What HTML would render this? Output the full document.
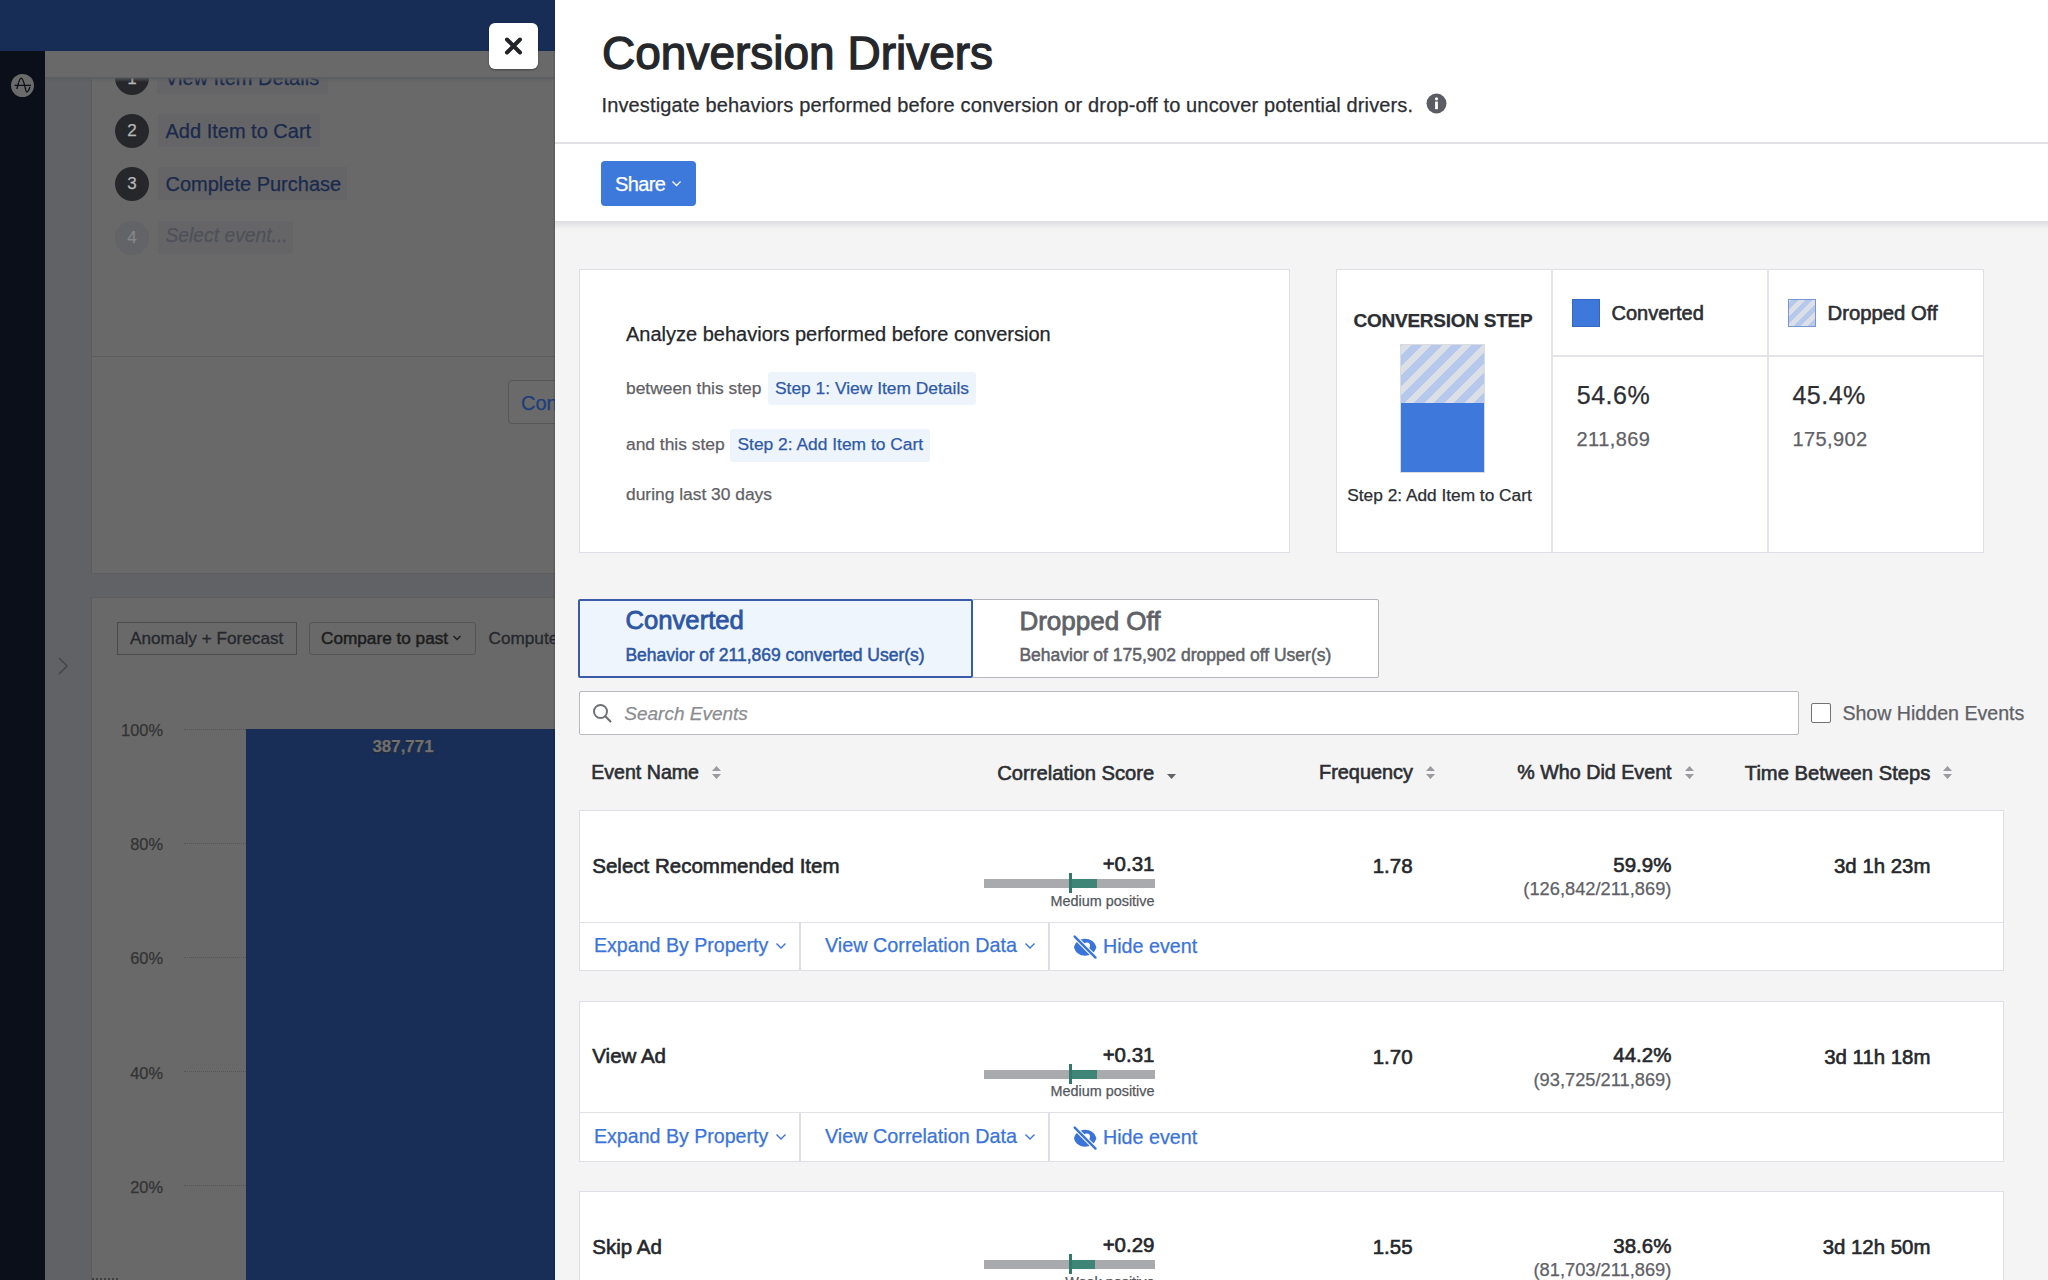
<!DOCTYPE html>
<html><head><meta charset="utf-8">
<style>
*{box-sizing:border-box;margin:0;padding:0}
html,body{width:2048px;height:1280px;overflow:hidden;background:#f4f4f4;font-family:"Liberation Sans",sans-serif;position:relative}
.a{position:absolute}
.t{position:absolute;white-space:nowrap;line-height:1;-webkit-text-stroke-width:0.25px}
.r{text-align:right}
.b{font-weight:bold}
.sb{-webkit-text-stroke:0.55px currentColor}
#L{position:absolute;left:0;top:0;width:555px;height:1280px;background:#616265;overflow:hidden}
</style></head>
<body>
<!-- LEFT DIMMED APP -->
<div id="L">
  <div class="a" style="left:0;top:0;width:555px;height:51px;background:#172d56"></div>
  <div class="a" style="left:0;top:51px;width:45px;height:1229px;background:#0a0f19"></div>
  <!-- logo -->
  <div class="a" style="left:11px;top:73.5px;width:23.2px;height:23.2px;border-radius:50%;background:#6a6a6a"></div>
  <svg class="a" style="left:11px;top:73.5px" width="23" height="23" viewBox="0 0 23 23"><path d="M5.9 15 C7.5 9, 8.5 4.2, 10.1 4.2 C11.8 4.2, 13 9, 13.8 12 C14.5 15, 15 18.1, 15.9 18.1 C17 18.1, 18.5 15, 18.8 12.9 M3.6 11.3 L20 11.3" fill="none" stroke="#0b0f17" stroke-width="1.3"/></svg>
  <!-- header strip -->
  <div class="a" style="left:45px;top:51px;width:510px;height:27px;background:#696969"></div><div class="a" style="left:45px;top:77px;width:510px;height:5px;z-index:5;background:linear-gradient(#5a5c60,rgba(99,99,99,0))"></div>
  <!-- card 1 -->
  <div class="a" style="left:91px;top:78px;width:480px;height:496px;background:#696969;border-left:1px solid #5c5c5c;border-bottom:1px solid #5c5c5c"></div>
  <div class="a" style="left:92px;top:356px;width:470px;height:1px;background:#5d5d5d"></div>
  <div class="a" style="left:45px;top:78px;width:510px;height:300px;overflow:hidden">
    <div class="a" style="left:70px;top:-17px;width:34px;height:34px;border-radius:50%;background:#25272b"></div><div class="t" style="left:70px;top:-8px;width:34px;text-align:center;font-size:17px;color:#b8b8b8">1</div>
    <div class="t" style="left:112px;top:-17px;width:171px;height:33px;background:#656567"></div>
    <div class="t" style="left:120px;top:-10px;font-size:20px;color:#1a2a4c">View Item Details</div>
  </div>
  <div class="a" style="left:115px;top:113.5px;width:34px;height:34px;border-radius:50%;background:#25272b"></div>
  <div class="t" style="left:115px;top:122px;width:34px;text-align:center;font-size:17px;color:#b8b8b8">2</div>
  <div class="a" style="left:158px;top:114px;width:162px;height:33px;background:#656567"></div>
  <div class="t" style="left:165.5px;top:121px;font-size:20px;color:#1a2a4c">Add Item to Cart</div>
  <div class="a" style="left:115px;top:166.5px;width:34px;height:34px;border-radius:50%;background:#25272b"></div>
  <div class="t" style="left:115px;top:175px;width:34px;text-align:center;font-size:17px;color:#b8b8b8">3</div>
  <div class="a" style="left:158px;top:167px;width:189px;height:33px;background:#656567"></div>
  <div class="t" style="left:165.5px;top:173.5px;font-size:20px;color:#1a2a4c">Complete Purchase</div>
  <div class="a" style="left:115px;top:220.5px;width:34px;height:34px;border-radius:50%;background:#636468"></div>
  <div class="t" style="left:115px;top:229px;width:34px;text-align:center;font-size:17px;color:#86878a">4</div>
  <div class="a" style="left:158px;top:221px;width:135px;height:33px;background:#656567"></div>
  <div class="t" style="left:165.5px;top:226px;font-size:19.3px;font-style:italic;color:#4e5159">Select event...</div>
  <!-- Con button -->
  <div class="a" style="left:508px;top:380px;width:80px;height:44px;border:1px solid #575757;border-radius:4px;background:#6a6a6a"></div>
  <div class="t" style="left:521px;top:392.5px;font-size:20px;color:#1d3f7a">Con</div>
  <!-- card 2 -->
  <div class="a" style="left:91px;top:597px;width:480px;height:700px;background:#696969;border-left:1px solid #5c5c5c;border-top:1px solid #5c5c5c"></div>
  <div class="a" style="left:117px;top:622px;width:180px;height:33px;border:1.5px solid #4a4a4a"></div>
  <div class="t" style="left:130px;top:630px;font-size:17.2px;color:#25272c;-webkit-text-stroke:0.3px #25272c">Anomaly + Forecast</div>
  <div class="a" style="left:309px;top:622px;width:167px;height:33px;border:1px solid #555;border-radius:3px"></div>
  <div class="t" style="left:321px;top:630px;font-size:17.2px;color:#1d1d1d;-webkit-text-stroke:0.5px #1d1d1d">Compare to past</div>
  <svg class="a" style="left:452px;top:634px" width="10" height="8" viewBox="0 0 10 8"><path d="M1.5 2 L5 5.5 L8.5 2" fill="none" stroke="#1d1d1d" stroke-width="1.4"/></svg>
  <div class="t" style="left:488.5px;top:630px;font-size:17.2px;color:#25272c;-webkit-text-stroke:0.3px #25272c">Compute</div>
  <svg class="a" style="left:56px;top:656px" width="14" height="20" viewBox="0 0 14 20"><path d="M3 2 L11 10 L3 18" fill="none" stroke="#46474b" stroke-width="1.6"/></svg>
  <!-- chart -->
  <div class="t r" style="left:100px;width:63px;top:722px;font-size:16.4px;color:#333">100%</div>
  <div class="t r" style="left:100px;width:63px;top:836px;font-size:16.4px;color:#333">80%</div>
  <div class="t r" style="left:100px;width:63px;top:950px;font-size:16.4px;color:#333">60%</div>
  <div class="t r" style="left:100px;width:63px;top:1064.5px;font-size:16.4px;color:#333">40%</div>
  <div class="t r" style="left:100px;width:63px;top:1178.5px;font-size:16.4px;color:#333">20%</div>
  <div class="a" style="left:184px;top:728.5px;width:62px;height:0;border-top:1px dotted #555"></div>
  <div class="a" style="left:184px;top:842.5px;width:62px;height:0;border-top:1px dotted #555"></div>
  <div class="a" style="left:184px;top:956.5px;width:62px;height:0;border-top:1px dotted #555"></div>
  <div class="a" style="left:184px;top:1071px;width:62px;height:0;border-top:1px dotted #555"></div>
  <div class="a" style="left:184px;top:1185px;width:62px;height:0;border-top:1px dotted #555"></div>
  <div class="a" style="left:246px;top:729px;width:320px;height:560px;background:#182e57"></div>
  <div class="t b" style="left:343px;width:120px;text-align:center;top:738.5px;font-size:16.9px;color:#707070;text-shadow:0 1px 1px #222">387,771</div>
  <div class="a" style="left:92px;top:1278px;width:26px;height:2px;border-top:2px dotted #3e3f43"></div>
  <!-- close button -->
  <div class="a" style="left:489px;top:22.5px;width:48.5px;height:46px;background:#fff;border-radius:6px;box-shadow:0 1px 2px rgba(0,0,0,.35)"></div>
  <svg class="a" style="left:489px;top:22.5px" width="49" height="46" viewBox="0 0 49 46"><path d="M18 16.5 L31 29.5 M31 16.5 L18 29.5" stroke="#222428" stroke-width="4" stroke-linecap="round"/></svg>
</div>
<div class="a" style="left:553px;top:0;width:3px;height:1280px;background:linear-gradient(to right,rgba(0,0,0,0),rgba(0,0,0,.25))"></div>

<!-- RIGHT PANEL -->
<div class="a" style="left:555px;top:0;width:1493px;height:1280px;background:#f4f4f4"></div>
<div class="a" style="left:555px;top:0;width:1493px;height:222px;background:#fff"></div>
<div class="a" style="left:555px;top:142px;width:1493px;height:2px;background:#e0e1e5"></div>
<div class="a" style="left:555px;top:221px;width:1493px;height:8px;background:linear-gradient(#dcdde1,#f4f4f4)"></div>
<div class="t" style="left:602px;top:29.5px;font-size:46px;color:#25272b;-webkit-text-stroke:1.3px #25272b">Conversion Drivers</div>
<div class="t" style="left:601.5px;top:95.4px;font-size:20px;color:#2c2e33;letter-spacing:0.14px">Investigate behaviors performed before conversion or drop-off to uncover potential drivers.</div>
<svg class="a" style="left:1426px;top:92.5px" width="21" height="21" viewBox="0 0 21 21"><circle cx="10.5" cy="10.5" r="10" fill="#5b5d62"/><circle cx="10.5" cy="5.8" r="1.6" fill="#fff"/><rect x="9.1" y="8.6" width="2.8" height="7.6" fill="#fff"/></svg>
<div class="a" style="left:601px;top:160.5px;width:94.5px;height:45.5px;background:#3d78db;border-radius:4px"></div>
<div class="t" style="left:615px;top:173.8px;font-size:20px;color:#fff;letter-spacing:-0.6px">Share</div>
<svg class="a" style="left:671px;top:179px" width="11" height="9" viewBox="0 0 11 9"><path d="M1.5 2.5 L5.5 6.5 L9.5 2.5" fill="none" stroke="#fff" stroke-width="1.3"/></svg>

<!-- card 1 -->
<div class="a" style="left:579px;top:269px;width:711px;height:284px;background:#fff;border:1.5px solid #dcdfe6"></div>
<div class="t" style="left:626px;top:324.3px;font-size:20px;color:#25272b">Analyze behaviors performed before conversion</div>
<div class="t" style="left:626px;top:379.5px;font-size:17.4px;color:#5f6166">between this step</div>
<div class="a" style="left:768px;top:371.5px;width:208px;height:33px;background:#eef4fc;border-radius:3px"></div>
<div class="t" style="left:775px;top:379.5px;font-size:17.4px;color:#2f5aa8">Step 1: View Item Details</div>
<div class="t" style="left:626px;top:436.2px;font-size:17.4px;color:#5f6166">and this step</div>
<div class="a" style="left:730px;top:428.5px;width:200px;height:33px;background:#eef4fc;border-radius:3px"></div>
<div class="t" style="left:737.5px;top:436.2px;font-size:17.4px;color:#2f5aa8">Step 2: Add Item to Cart</div>
<div class="t" style="left:626px;top:485.7px;font-size:17.4px;color:#5f6166">during last 30 days</div>

<!-- card 2 -->
<div class="a" style="left:1336px;top:269px;width:648px;height:284px;background:#fff;border:1.5px solid #dcdfe6"></div>
<div class="a" style="left:1550.5px;top:269px;width:2px;height:284px;background:#e2e4e9"></div>
<div class="a" style="left:1766.5px;top:269px;width:2px;height:284px;background:#e2e4e9"></div>
<div class="a" style="left:1551px;top:355px;width:432px;height:2px;background:#e2e4e9"></div>
<div class="t b" style="left:1343px;width:200px;text-align:center;top:311px;font-size:19px;color:#2c2e33;letter-spacing:-0.25px">CONVERSION STEP</div>
<div class="a" style="left:1400px;top:343.5px;width:85px;height:129px;border:1px solid #d9dbe0;overflow:hidden">
  <div class="a" style="left:-9px;top:0;width:92px;height:58px;background:repeating-linear-gradient(-45deg,#b6c8ec 0,#b6c8ec 7.4px,#dcdfe5 7.4px,#dcdfe5 14.1px)"></div>
  <div class="a" style="left:0;top:58px;width:83px;height:70px;background:#3f78db"></div>
</div>
<div class="t" style="left:1347.3px;top:487.3px;font-size:17.3px;color:#2c2e33">Step 2: Add Item to Cart</div>
<div class="a" style="left:1572px;top:299px;width:28px;height:28px;background:#3f78db;border:1px solid #3567c2"></div>
<div class="t" style="left:1611.5px;top:303px;font-size:20px;color:#2c2e33;-webkit-text-stroke:0.6px #2c2e33">Converted</div>
<div class="a" style="left:1788px;top:299px;width:28px;height:28px;border:1px solid #7896d6;background:repeating-linear-gradient(-45deg,#b6c8ec 0,#b6c8ec 5px,#dcdfe5 5px,#dcdfe5 10px)"></div>
<div class="t" style="left:1827.6px;top:303px;font-size:20.3px;color:#2c2e33;-webkit-text-stroke:0.6px #2c2e33">Dropped Off</div>
<div class="t" style="left:1576.8px;top:383.3px;font-size:25px;color:#2c2e33;letter-spacing:0.5px">54.6%</div>
<div class="t" style="left:1576.6px;top:428.8px;font-size:20px;color:#5f6166;letter-spacing:0.4px">211,869</div>
<div class="t" style="left:1792.4px;top:383.3px;font-size:25px;color:#2c2e33;letter-spacing:0.5px">45.4%</div>
<div class="t" style="left:1792.4px;top:428.8px;font-size:20px;color:#5f6166;letter-spacing:0.4px">175,902</div>

<!-- tabs -->
<div class="a" style="left:972px;top:599px;width:407px;height:79px;background:#fff;border:1px solid #b4b6bc;border-radius:2px"></div>
<div class="a" style="left:578px;top:599px;width:395px;height:79px;background:#eef5fd;border:2px solid #3a5ca8;border-radius:2px"></div>
<div class="t" style="left:625.4px;top:608px;font-size:25.7px;color:#2d56a4;-webkit-text-stroke:0.8px #2d56a4">Converted</div>
<div class="t" style="left:625.4px;top:646.5px;font-size:17.5px;color:#2d56a4;-webkit-text-stroke:0.5px #2d56a4">Behavior of 211,869 converted User(s)</div>
<div class="t" style="left:1019.4px;top:608px;font-size:26px;color:#606268;-webkit-text-stroke:0.8px #606268">Dropped Off</div>
<div class="t" style="left:1019.4px;top:646.5px;font-size:17.5px;color:#606268;-webkit-text-stroke:0.5px #606268">Behavior of 175,902 dropped off User(s)</div>

<!-- search -->
<div class="a" style="left:579px;top:690.5px;width:1220px;height:44px;background:#fff;border:1.5px solid #b8b9be;border-radius:2px"></div>
<svg class="a" style="left:590px;top:701px" width="24" height="24" viewBox="0 0 24 24"><circle cx="10.5" cy="10.5" r="6.5" fill="none" stroke="#707276" stroke-width="2"/><path d="M15.3 15.3 L20.5 20.5" stroke="#707276" stroke-width="2.2" stroke-linecap="round"/></svg>
<div class="t" style="left:624.3px;top:703.7px;font-size:19px;font-style:italic;color:#8c8d91">Search Events</div>
<div class="a" style="left:1810.5px;top:703px;width:20px;height:19.5px;background:#fff;border:1.5px solid #707276;border-radius:2px"></div>
<div class="t" style="left:1842.4px;top:703.5px;font-size:19.6px;color:#5f6166">Show Hidden Events</div>

<!-- headers -->
<div class="t" style="left:591.2px;top:763px;font-size:19.6px;color:#2c2e33;-webkit-text-stroke:0.6px #2c2e33">Event Name</div>
<div class="t" style="left:997.2px;top:762.8px;font-size:20.2px;color:#2c2e33;-webkit-text-stroke:0.6px #2c2e33">Correlation Score</div>
<div class="t" style="left:1319px;top:763px;font-size:19.9px;color:#2c2e33;-webkit-text-stroke:0.6px #2c2e33">Frequency</div>
<div class="t" style="left:1517.3px;top:763px;font-size:19.7px;color:#2c2e33;-webkit-text-stroke:0.6px #2c2e33">% Who Did Event</div>
<div class="t" style="left:1744.8px;top:762.8px;font-size:20.2px;color:#2c2e33;-webkit-text-stroke:0.6px #2c2e33">Time Between Steps</div>
<svg class="a" style="left:711px;top:765px" width="11" height="15" viewBox="0 0 11 15"><path d="M5.5 1 L10 6 L1 6 Z M5.5 14 L10 9 L1 9 Z" fill="#9a9ba0"/></svg>
<svg class="a" style="left:1165.5px;top:772.5px" width="11" height="7" viewBox="0 0 11 7"><path d="M1 1 L10 1 L5.5 6 Z" fill="#606268"/></svg>
<svg class="a" style="left:1424.5px;top:765px" width="11" height="15" viewBox="0 0 11 15"><path d="M5.5 1 L10 6 L1 6 Z M5.5 14 L10 9 L1 9 Z" fill="#9a9ba0"/></svg>
<svg class="a" style="left:1683.5px;top:765px" width="11" height="15" viewBox="0 0 11 15"><path d="M5.5 1 L10 6 L1 6 Z M5.5 14 L10 9 L1 9 Z" fill="#9a9ba0"/></svg>
<svg class="a" style="left:1942px;top:765px" width="11" height="15" viewBox="0 0 11 15"><path d="M5.5 1 L10 6 L1 6 Z M5.5 14 L10 9 L1 9 Z" fill="#9a9ba0"/></svg>

<!-- ROWS -->
<div class="a" style="left:579px;top:810.0px;width:1425px;height:161px;background:#fff;border:1.5px solid #dcdfe6"></div>
<div class="a" style="left:580px;top:921.5px;width:1423px;height:1px;background:#dfe1e6"></div>
<div class="a" style="left:799px;top:922.0px;width:1.5px;height:48px;background:#dcdfe6"></div>
<div class="a" style="left:1048px;top:922.0px;width:1.5px;height:48px;background:#dcdfe6"></div>
<div class="t" style="left:592.3px;top:855.6px;font-size:20.5px;color:#25272b;-webkit-text-stroke:0.6px #25272b">Select Recommended Item</div>
<div class="t r" style="left:1000px;width:154.5px;top:854.4px;font-size:20.5px;color:#25272b;-webkit-text-stroke:0.6px #25272b">+0.31</div>
<div class="a" style="left:984px;top:879.0px;width:171px;height:9px;background:#a9aaae"></div>
<div class="a" style="left:1069px;top:879.0px;width:27.5px;height:9px;background:#3f8577"></div>
<div class="a" style="left:1068.5px;top:873.0px;width:3px;height:20px;background:#2f7a6a"></div>
<div class="t r" style="left:1000px;width:154.5px;top:893.8px;font-size:14.4px;color:#55575c">Medium positive</div>
<div class="t r" style="left:1300px;width:112.6px;top:856.0px;font-size:20.5px;color:#25272b;-webkit-text-stroke:0.6px #25272b">1.78</div>
<div class="t r" style="left:1500px;width:171.4px;top:854.6px;font-size:20.5px;color:#25272b;-webkit-text-stroke:0.6px #25272b">59.9%</div>
<div class="t r" style="left:1450px;width:221.4px;top:880.0px;font-size:18.3px;color:#5f6166">(126,842/211,869)</div>
<div class="t r" style="left:1750px;width:180.4px;top:856.3px;font-size:20.4px;color:#25272b;-webkit-text-stroke:0.6px #25272b">3d 1h 23m</div>
<div class="t" style="left:594px;top:936.3px;font-size:19.6px;color:#3b74d8">Expand By Property</div>
<svg class="a" style="left:775px;top:941.0px" width="12" height="10" viewBox="0 0 12 10"><path d="M1.5 2.5 L6 7 L10.5 2.5" fill="none" stroke="#3b74d8" stroke-width="1.4"/></svg>
<div class="t" style="left:825px;top:936.2px;font-size:19.8px;color:#3b74d8">View Correlation Data</div>
<svg class="a" style="left:1024px;top:941.0px" width="12" height="10" viewBox="0 0 12 10"><path d="M1.5 2.5 L6 7 L10.5 2.5" fill="none" stroke="#3b74d8" stroke-width="1.4"/></svg>
<svg class="a" style="left:1066px;top:930.0px" width="40" height="35" viewBox="0 0 40 35"><path d="M8 17.3 C10.5 6, 27.5 6, 30.3 17.3 C27.5 28.6, 10.5 28.6, 8 17.3 Z" fill="#3b74d8"/><circle cx="20.8" cy="15.6" r="3.2" fill="#fff"/><path d="M8.7 6.6 L29.5 27.6" stroke="#fff" stroke-width="4.4"/><path d="M8.7 6.6 L29.5 27.6" stroke="#3b74d8" stroke-width="2.4" stroke-linecap="round"/></svg>
<div class="t" style="left:1103px;top:937.1px;font-size:19.7px;color:#3b74d8">Hide event</div>
<div class="a" style="left:579px;top:1000.5px;width:1425px;height:161px;background:#fff;border:1.5px solid #dcdfe6"></div>
<div class="a" style="left:580px;top:1112.0px;width:1423px;height:1px;background:#dfe1e6"></div>
<div class="a" style="left:799px;top:1112.5px;width:1.5px;height:48px;background:#dcdfe6"></div>
<div class="a" style="left:1048px;top:1112.5px;width:1.5px;height:48px;background:#dcdfe6"></div>
<div class="t" style="left:592.3px;top:1046.1px;font-size:20.5px;color:#25272b;-webkit-text-stroke:0.6px #25272b">View Ad</div>
<div class="t r" style="left:1000px;width:154.5px;top:1044.9px;font-size:20.5px;color:#25272b;-webkit-text-stroke:0.6px #25272b">+0.31</div>
<div class="a" style="left:984px;top:1069.5px;width:171px;height:9px;background:#a9aaae"></div>
<div class="a" style="left:1069px;top:1069.5px;width:27.5px;height:9px;background:#3f8577"></div>
<div class="a" style="left:1068.5px;top:1063.5px;width:3px;height:20px;background:#2f7a6a"></div>
<div class="t r" style="left:1000px;width:154.5px;top:1084.3px;font-size:14.4px;color:#55575c">Medium positive</div>
<div class="t r" style="left:1300px;width:112.6px;top:1046.5px;font-size:20.5px;color:#25272b;-webkit-text-stroke:0.6px #25272b">1.70</div>
<div class="t r" style="left:1500px;width:171.4px;top:1045.1px;font-size:20.5px;color:#25272b;-webkit-text-stroke:0.6px #25272b">44.2%</div>
<div class="t r" style="left:1450px;width:221.4px;top:1070.5px;font-size:18.3px;color:#5f6166">(93,725/211,869)</div>
<div class="t r" style="left:1750px;width:180.4px;top:1046.8px;font-size:20.4px;color:#25272b;-webkit-text-stroke:0.6px #25272b">3d 11h 18m</div>
<div class="t" style="left:594px;top:1126.8px;font-size:19.6px;color:#3b74d8">Expand By Property</div>
<svg class="a" style="left:775px;top:1131.5px" width="12" height="10" viewBox="0 0 12 10"><path d="M1.5 2.5 L6 7 L10.5 2.5" fill="none" stroke="#3b74d8" stroke-width="1.4"/></svg>
<div class="t" style="left:825px;top:1126.7px;font-size:19.8px;color:#3b74d8">View Correlation Data</div>
<svg class="a" style="left:1024px;top:1131.5px" width="12" height="10" viewBox="0 0 12 10"><path d="M1.5 2.5 L6 7 L10.5 2.5" fill="none" stroke="#3b74d8" stroke-width="1.4"/></svg>
<svg class="a" style="left:1066px;top:1120.5px" width="40" height="35" viewBox="0 0 40 35"><path d="M8 17.3 C10.5 6, 27.5 6, 30.3 17.3 C27.5 28.6, 10.5 28.6, 8 17.3 Z" fill="#3b74d8"/><circle cx="20.8" cy="15.6" r="3.2" fill="#fff"/><path d="M8.7 6.6 L29.5 27.6" stroke="#fff" stroke-width="4.4"/><path d="M8.7 6.6 L29.5 27.6" stroke="#3b74d8" stroke-width="2.4" stroke-linecap="round"/></svg>
<div class="t" style="left:1103px;top:1127.6px;font-size:19.7px;color:#3b74d8">Hide event</div>
<div class="a" style="left:579px;top:1191.0px;width:1425px;height:161px;background:#fff;border:1.5px solid #dcdfe6"></div>
<div class="a" style="left:580px;top:1302.5px;width:1423px;height:1px;background:#dfe1e6"></div>
<div class="a" style="left:799px;top:1303.0px;width:1.5px;height:48px;background:#dcdfe6"></div>
<div class="a" style="left:1048px;top:1303.0px;width:1.5px;height:48px;background:#dcdfe6"></div>
<div class="t" style="left:592.3px;top:1236.6px;font-size:20.5px;color:#25272b;-webkit-text-stroke:0.6px #25272b">Skip Ad</div>
<div class="t r" style="left:1000px;width:154.5px;top:1235.4px;font-size:20.5px;color:#25272b;-webkit-text-stroke:0.6px #25272b">+0.29</div>
<div class="a" style="left:984px;top:1260.0px;width:171px;height:9px;background:#a9aaae"></div>
<div class="a" style="left:1069px;top:1260.0px;width:25.5px;height:9px;background:#3f8577"></div>
<div class="a" style="left:1068.5px;top:1254.0px;width:3px;height:20px;background:#2f7a6a"></div>
<div class="t r" style="left:1000px;width:154.5px;top:1274.8px;font-size:14.4px;color:#55575c">Weak positive</div>
<div class="t r" style="left:1300px;width:112.6px;top:1237.0px;font-size:20.5px;color:#25272b;-webkit-text-stroke:0.6px #25272b">1.55</div>
<div class="t r" style="left:1500px;width:171.4px;top:1235.6px;font-size:20.5px;color:#25272b;-webkit-text-stroke:0.6px #25272b">38.6%</div>
<div class="t r" style="left:1450px;width:221.4px;top:1261.0px;font-size:18.3px;color:#5f6166">(81,703/211,869)</div>
<div class="t r" style="left:1750px;width:180.4px;top:1237.3px;font-size:20.4px;color:#25272b;-webkit-text-stroke:0.6px #25272b">3d 12h 50m</div>
<div class="t" style="left:594px;top:1317.3px;font-size:19.6px;color:#3b74d8">Expand By Property</div>
<svg class="a" style="left:775px;top:1322.0px" width="12" height="10" viewBox="0 0 12 10"><path d="M1.5 2.5 L6 7 L10.5 2.5" fill="none" stroke="#3b74d8" stroke-width="1.4"/></svg>
<div class="t" style="left:825px;top:1317.2px;font-size:19.8px;color:#3b74d8">View Correlation Data</div>
<svg class="a" style="left:1024px;top:1322.0px" width="12" height="10" viewBox="0 0 12 10"><path d="M1.5 2.5 L6 7 L10.5 2.5" fill="none" stroke="#3b74d8" stroke-width="1.4"/></svg>
<svg class="a" style="left:1066px;top:1311.0px" width="40" height="35" viewBox="0 0 40 35"><path d="M8 17.3 C10.5 6, 27.5 6, 30.3 17.3 C27.5 28.6, 10.5 28.6, 8 17.3 Z" fill="#3b74d8"/><circle cx="20.8" cy="15.6" r="3.2" fill="#fff"/><path d="M8.7 6.6 L29.5 27.6" stroke="#fff" stroke-width="4.4"/><path d="M8.7 6.6 L29.5 27.6" stroke="#3b74d8" stroke-width="2.4" stroke-linecap="round"/></svg>
<div class="t" style="left:1103px;top:1318.1px;font-size:19.7px;color:#3b74d8">Hide event</div>
</body></html>
